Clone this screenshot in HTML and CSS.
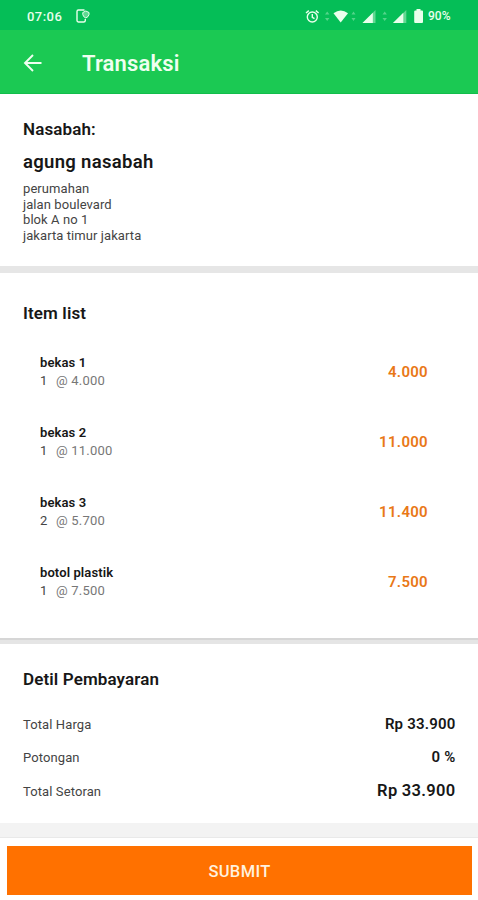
FILE: index.html
```html
<!DOCTYPE html>
<html lang="id">
<head>
<meta charset="utf-8">
<title>Transaksi</title>
<link rel="stylesheet" href="styles.css">
</head>
<body>
<div class="screen">
  <div class="statusbar">
    <span class="time">07:06</span>
    <svg class="cast" width="16" height="16" viewBox="0 0 16 16" fill="none" stroke="currentColor" stroke-width="1.4"><path d="M9.500 2H3.400Q2 2 2 3.400V12.600Q2 14 3.400 14H8.600Q10.300 14 10.300 12.500V11"/><path d="M10.800 3L14 4.500V6.500Q13.700 8.800 10.800 10Q8 8.800 7.800 6.500V4.500Z" fill="currentColor" fill-opacity=".4" stroke-width="1"/></svg>
    <svg class="indicators" width="128" height="20" viewBox="0 0 128 20" fill="currentColor">
      <g fill="none" stroke="currentColor" stroke-width="1.4"><circle cx="12.300" cy="11" r="5"/><path d="M6 7L8.800 4.600M15.800 4.600L18.600 7M12.300 8V11.300L14.500 12.700"/></g>
      <g opacity=".35"><path d="M25 8.500L27.200 5.500L29.400 8.500ZM25 12L27.200 15L29.400 12ZM51.500 8.500L53.500 5.500L55.500 8.500ZM51.500 12L53.500 15L55.500 12ZM82.500 8.500L84.700 5.500L86.900 8.500ZM82.500 12L84.700 15L86.900 12Z"/></g>
      <path d="M33.500 7.300Q40.700 1.800 48 7.300L40.700 16.500Z"/>
      <path d="M62.500 17L75.500 4V17Z" opacity=".4"/><path d="M62.500 17L72.800 6.700V17Z"/>
      <path d="M93 17L106.300 4V17Z" opacity=".4"/><path d="M93 17L103.300 6.700V17Z"/>
      <path d="M115.500 4.500H116.500V3H120.500V4.500H122Q123 4.500 123 5.500V16Q123 17 122 17H115.200Q114.200 17 114.200 16V5.500Q114.200 4.500 115.500 4.500Z"/>
    </svg>
    <span class="battery">90%</span>
  </div>
  <header class="appbar">
    <svg width="20" height="20" viewBox="0 0 20 20" fill="none" stroke="currentColor" stroke-width="1.900"><path d="M18.500 10H2M10 2L2 10L10 18"/></svg>
    <h1>Transaksi</h1>
  </header>
  <section class="customer">
    <h2>Nasabah:</h2>
    <p class="name">agung nasabah</p>
    <address>perumahan<br>jalan boulevard<br>blok A no 1<br>jakarta timur jakarta</address>
  </section>
  <section class="items">
    <h2>Item list</h2>
    <ul>
      <li><div><b>bekas 1</b><p><i>1</i>@ 4.000</p></div><strong>4.000</strong></li>
      <li><div><b>bekas 2</b><p><i>1</i>@ 11.000</p></div><strong>11.000</strong></li>
      <li><div><b>bekas 3</b><p><i>2</i>@ 5.700</p></div><strong>11.400</strong></li>
      <li><div><b>botol plastik</b><p><i>1</i>@ 7.500</p></div><strong>7.500</strong></li>
    </ul>
  </section>
  <section class="payment">
    <h2>Detil Pembayaran</h2>
    <dl>
      <div><dt>Total Harga</dt><dd>Rp 33.900</dd></div>
      <div><dt>Potongan</dt><dd>0 %</dd></div>
      <div class="total"><dt>Total Setoran</dt><dd>Rp 33.900</dd></div>
    </dl>
  </section>
  <footer><button type="button">SUBMIT</button></footer>
</div>
</body>
</html>
```
FILE: styles.css
```css
* { box-sizing: border-box; margin: 0; padding: 0; }
body { font-family: Roboto, "Liberation Sans", sans-serif; color: #171717; background: #fff; }
.screen { width: 478px; height: 900px; display: flex; flex-direction: column; overflow: hidden; background: #f3f3f3; }
.statusbar { height: 30px; flex: none; display: flex; align-items: center; padding: 2px 26px 0 27px; background: #05be57; color: #e9ffec; font-size: 13px; font-weight: 500; }
.time { width: 48px; letter-spacing: .45px; }
.indicators { margin-left: auto; }
.battery { font-size: 12px; width: 24px; }
.appbar { height: 64px; flex: none; display: flex; align-items: center; gap: 39px; padding: 2px 23px 0; background: #1bc953; color: #effff0; border-bottom: 1px solid #12bd4b; }
h1 { font-size: 22px; line-height: 26px; font-weight: 600; letter-spacing: .15px; padding-top: 2px; }
section { background: #fff; flex: none; padding: 0 23px; }
h2 { font-size: 17px; line-height: 20px; font-weight: 600; letter-spacing: .12px; }
.customer { height: 179px; padding-top: 25px; border-bottom: 7px solid #e6e6e6; }
.name { margin-top: 12px; font-size: 18.5px; line-height: 22px; font-weight: 600; letter-spacing: .3px; }
address { margin-top: 8px; font-style: normal; font-size: 13px; line-height: 15.7px; letter-spacing: .08px; color: #444; }
.items { height: 371px; padding-top: 30px; border-bottom: 4px solid #e5e5e5; box-shadow: inset 0 -2px #d6d6d6; }
ul { list-style: none; margin-top: 14px; padding: 0 27px 0 17px; }
li { height: 70px; display: flex; justify-content: space-between; align-items: center; }
li b { display: block; font-size: 13px; line-height: 18px; font-weight: 600; letter-spacing: .1px; }
li p { font-size: 13px; line-height: 18px; letter-spacing: .2px; color: #777; display: flex; }
li i { font-style: normal; width: 16px; color: #444; }
li strong { font-size: 15px; font-weight: 600; letter-spacing: .3px; color: #e97817; }
.payment { height: 179px; padding-top: 25px; }
dl { margin-top: 18px; }
dl div { display: flex; justify-content: space-between; align-items: center; height: 33px; }
dt { font-size: 13px; padding-top: 1px; letter-spacing: .1px; color: #444; }
dd { font-size: 15px; font-weight: 600; letter-spacing: .2px; margin-right: -.5px; }
.total { padding-top: 2px; }
.total dd { font-size: 16.5px; letter-spacing: .3px; }
footer { margin-top: auto; height: 62px; flex: none; padding: 8px 6px 5px 7px; background: #fff; box-shadow: 0 -1px #e9e9e9; }
button { display: block; width: 100%; height: 49px; border: 0; padding-top: 2px; background: #ff7100; color: #fff1df; font-family: inherit; font-size: 16.5px; font-weight: 500; letter-spacing: .35px; }
```
